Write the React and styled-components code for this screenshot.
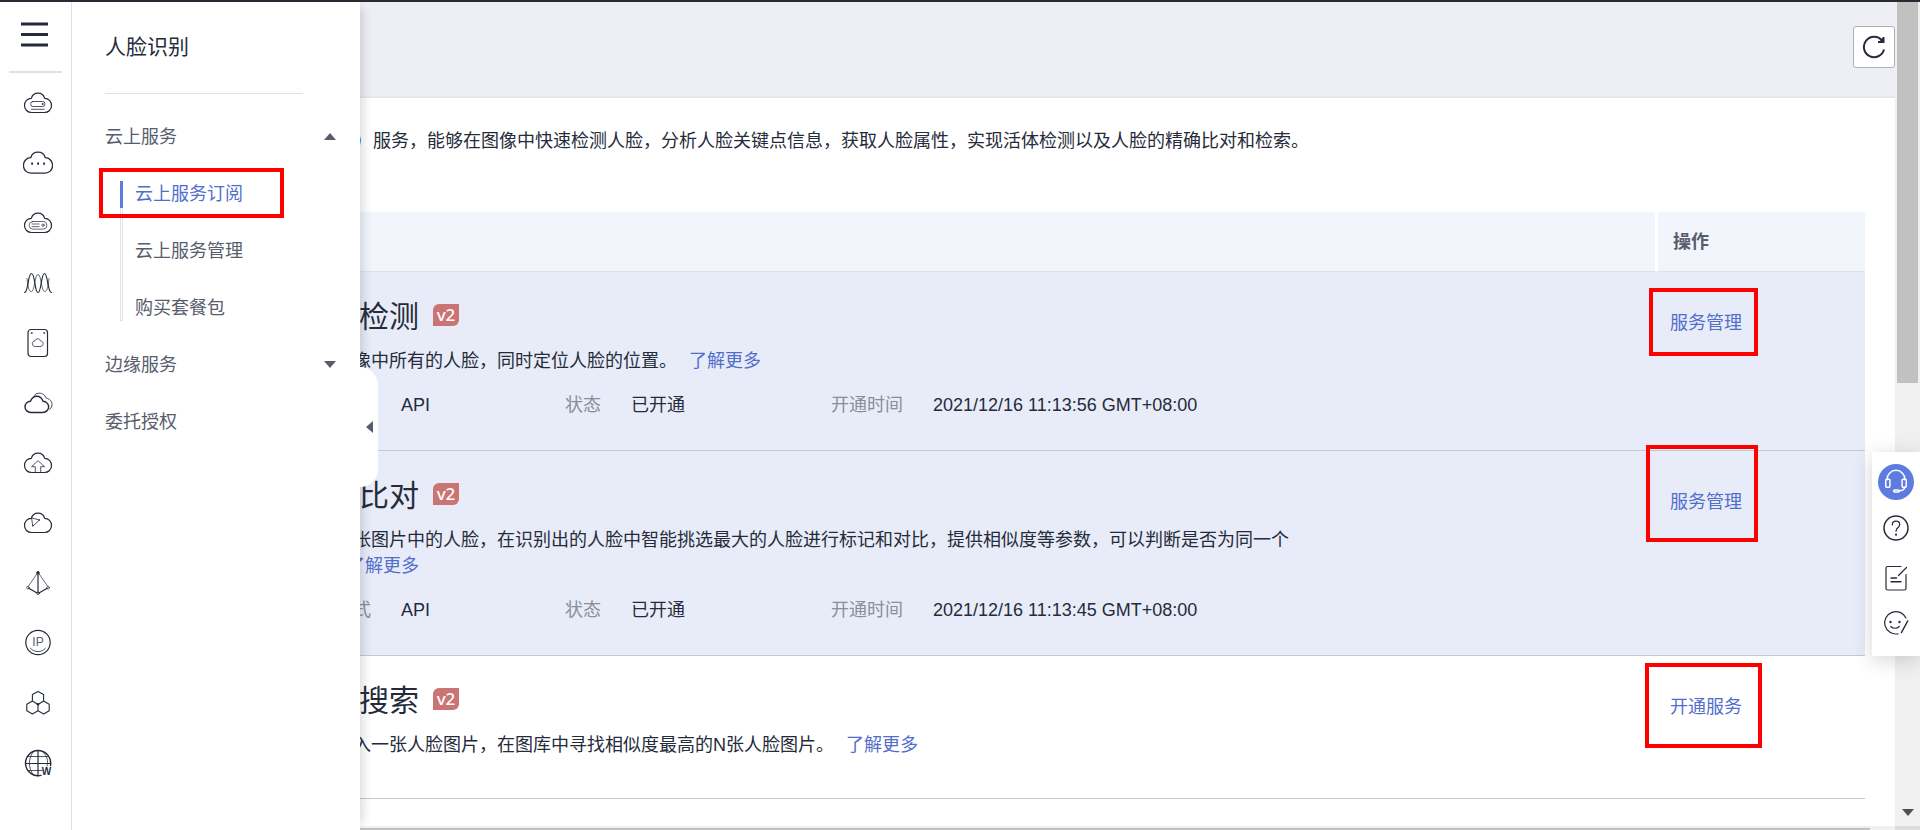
import React from "react";
import styled, { createGlobalStyle } from "styled-components";

const Global = createGlobalStyle`
  *, *::before { box-sizing: border-box; }
  body {
    margin: 0;
    overflow: hidden;
    background: #fff;
    color: #252b3a;
    font: 400 18px/26px "Liberation Sans", "Noto Sans CJK SC", sans-serif;
  }
  button { font: inherit; color: inherit; border: 0; padding: 0; background: none; cursor: pointer; }
  a { color: #526ecc; text-decoration: none; }
`;

/* ---------- frame ---------- */

const Page = styled.div`
  display: flex;
  flex-direction: column;
  height: 100vh;
`;

const TopEdge = styled.div`
  flex: none;
  height: 2px;
  background: #282b33;
`;

const Frame = styled.div`
  flex: 1;
  min-height: 0;
  display: grid;
  grid-template-columns: 72px minmax(0, 1fr) 25px;
  position: relative;
`;

/* ---------- icon rail ---------- */

const Rail = styled.nav`
  display: flex;
  flex-direction: column;
  align-items: center;
  border-right: 1px solid #dfe1e6;
  background: #fff;
  overflow: hidden;
`;

const MenuButton = styled.button`
  flex: none;
  width: 53px;
  height: 71px;
  padding: 19px 0 0 12px;
  border-bottom: 2px solid #dfe1e6;
  display: flex;
  align-items: flex-start;
`;

const RailLink = styled.a`
  flex: none;
  height: 60px;
  padding-left: 4px;
  display: flex;
  align-items: center;
  color: #252b3a;
`;

/* ---------- service panel ---------- */

const Panel = styled.aside`
  position: absolute;
  z-index: 2;
  top: 0;
  bottom: 0;
  left: 72px;
  width: 288px;
  padding: 30px 24px 0 33px;
  background: #fff;
  box-shadow: 8px 0 10px -6px rgba(37, 43, 58, 0.2);
`;

const PanelTitle = styled.h1`
  margin: 0 33px 14px 0;
  padding-bottom: 31px;
  border-bottom: 1px solid #dfe1e6;
  font-size: 21px;
  font-weight: 400;
  line-height: 30px;
`;

const GroupButton = styled.button`
  display: flex;
  align-items: center;
  justify-content: space-between;
  width: 100%;
  height: 57px;
  color: #575d6c;
  text-align: left;
`;

const PlainItem = styled.a`
  display: flex;
  align-items: center;
  height: 57px;
  color: #575d6c;
`;

const Triangle = styled.span`
  width: 0;
  height: 0;
  border: 6px solid transparent;
  border-width: ${(p) => (p.$dir === "left" ? "6px 7px 6px 0" : p.$dir === "up" ? "0 6px 7px" : "7px 6px 0")};
  border-${(p) => ({ left: "right", up: "bottom", down: "top" })[p.$dir]}-color: ${(p) => p.$color || "#575d6c"};
`;

const SubMenu = styled.ul`
  list-style: none;
  margin: 0;
  padding: 0 0 0 15px;
`;

const SubItem = styled.li`
  position: relative;
  display: flex;
  height: 57px;
  padding: ${(p) => (p.$first ? "16px 0 0" : p.$last ? "0 0 15px" : "0")};
  &::before {
    content: "";
    width: 3px;
    margin-right: 12px;
    background: ${(p) => p.$first && "linear-gradient(#5e7ce0 27px, transparent 27px),"}
      linear-gradient(90deg, #dfe1e6 1px, #fff 1px 2px, #dfe1e6 2px);
    border-bottom: ${(p) => (p.$last ? "1px solid #dfe1e6" : "0")};
  }
  a {
    display: flex;
    align-items: ${(p) => (p.$first ? "flex-start" : p.$last ? "flex-end" : "center")};
    color: ${(p) => (p.$first ? "#526ecc" : "#575d6c")};
  }
`;

const CollapseTab = styled.button`
  position: absolute;
  top: 365px;
  left: 100%;
  width: 18px;
  height: 120px;
  padding-left: 6px;
  display: flex;
  align-items: center;
  border-radius: 0 18px 18px 0;
  background: #fff;
`;

/* Red frame laid over an element that deserves attention */
const Mark = styled.span`
  position: absolute;
  z-index: 1;
  top: ${(p) => p.$top}px;
  left: ${(p) => p.$left}px;
  width: ${(p) => p.$w}px;
  height: ${(p) => p.$h}px;
  border: 4px solid #f00;
  pointer-events: none;
`;

/* ---------- main column ---------- */

const Main = styled.main`
  display: flex;
  flex-direction: column;
  min-height: 0;
  overflow: hidden;
`;

const Toolbar = styled.header`
  flex: none;
  display: flex;
  justify-content: flex-end;
  height: 96px;
  padding-top: 24px;
  background: #eeeff5;
  box-shadow: inset 0 -3px 3px -2px rgba(37, 43, 58, 0.08);
`;

const Refresh = styled.button`
  width: 42px;
  height: 42px;
  display: flex;
  align-items: center;
  justify-content: center;
  border: 1px solid #adb0b8;
  border-radius: 3px;
  background: #fff;
`;

const Content = styled.section`
  flex: 1;
  min-height: 0;
  overflow: hidden;
  padding: 30px 30px 0 157px;
`;

const Intro = styled.p`
  margin: 0 0 58px;
`;

const Table = styled.table`
  width: 100%;
  border-collapse: separate;
  border-spacing: 0;
  table-layout: fixed;
`;

const Th = styled.th`
  height: 60px;
  padding: 0 15px;
  text-align: left;
  font-weight: 700;
  color: #575d6c;
  background: #f2f5fc;
  border-bottom: 1px solid #dfe1e6;
  width: ${(p) => (p.$action ? "207px" : "auto")};
  border-right: ${(p) => (p.$action ? "0" : "3px solid #fff")};
`;

const Td = styled.td`
  position: relative;
  vertical-align: top;
  padding: ${(p) => (p.$action ? "38px 12px 0" : "24px 0 32px 70px")};
  background: ${(p) => (p.$on ? "#e8ecf8" : "#fff")};
  border-bottom: 1px solid #c8c9cc;
`;

const ServiceTitle = styled.h2`
  display: flex;
  align-items: center;
  gap: 14px;
  margin: 0 0 10px;
  font-size: 30px;
  font-weight: 400;
  line-height: 42px;
`;

const Badge = styled.span`
  width: 26px;
  height: 22px;
  margin-bottom: 4px;
  border-radius: 6px 0 6px 0;
  background: #cb7474;
  color: #fff;
  font: 500 17px/22px "Noto Sans", sans-serif;
  text-align: center;
`;

const Desc = styled.p`
  max-width: 1000px;
  min-height: ${(p) => (p.$alone ? "34px" : "26px")};
  margin: 0;
  a { margin-left: 12px; }
`;

const Facts = styled.dl`
  display: grid;
  grid-template-columns: 266px 266px auto;
  margin: 18px 0 0;
  div { display: flex; gap: 30px; }
  dt { color: #8a8e99; }
  dd { margin: 0; }
`;

const HScroll = styled.div`
  flex: none;
  height: 4px;
  padding: 2px 25px 0 0;
  background: #f0f0f0;
  div { height: 2px; background: #c1c1c1; }
`;

const VScroll = styled.div`
  display: flex;
  flex-direction: column;
  align-items: center;
  background: #f0f0f0;
`;

const VThumb = styled.div`
  width: 21px;
  height: 46%;
  margin-bottom: auto;
  background: #c1c1c1;
`;

const Corner = styled.div`
  width: 100%;
  height: 4px;
  margin-top: 10px;
  background: #dcdcdc;
`;

/* ---------- floating help ---------- */

const Helper = styled.div`
  position: absolute;
  z-index: 3;
  right: 0;
  top: 450px;
  width: 48px;
  height: 204px;
  padding-top: 12px;
  display: flex;
  flex-direction: column;
  align-items: center;
  background: #fff;
  box-shadow: 0 4px 20px rgba(37, 43, 58, 0.2);
`;

const HelperButton = styled.button`
  width: 36px;
  height: ${(p) => (p.$primary ? "36px" : "30px")};
  margin-bottom: ${(p) => p.$gap}px;
  display: flex;
  align-items: center;
  justify-content: center;
  border-radius: 50%;
  background: ${(p) => (p.$primary ? "#5e7ce0" : "none")};
  color: ${(p) => (p.$primary ? "#fff" : "#252b3a")};
`;

/* ---------- drawings ---------- */

const Svg = ({ size = 30, children, w = 1.2 }) => (
  <svg width={size} height={size} viewBox="0 0 30 30" fill="none" stroke="currentColor" strokeWidth={w} strokeLinecap="round" strokeLinejoin="round" aria-hidden="true">
    {children}
  </svg>
);

const CLOUD = "M8.5 24.5C4.500 24.500 1.500 21.500 1.500 17.500C1.500 13.500 4.500 10.300 8.300 10.300C9.200 7.200 11.800 5.200 15 5.200C18.200 5.200 20.800 7.200 21.700 10.300C25.500 10.300 28.500 13.500 28.500 17.500C28.500 21.500 25.500 24.500 21.500 24.500Z";
const Cloud = (props) => <path d={CLOUD} {...props} />;

const railIcons = [
  ["弹性云服务器", <><Cloud /><rect x="7.800" y="13.500" width="14" height="5" rx="2" strokeWidth=".8" /><path d="M8.500 21.300H21" strokeWidth=".8" /><circle cx="19.700" cy="16" r=".9" fill="currentColor" stroke="none" /></>],
  ["云耀云服务器", <><Cloud transform="translate(-1.200 -1.400) scale(1.080)" /><path d="M8.200 15.700h1.800M14.200 15.700h1.800M20.200 15.700h1.800" strokeWidth="2.200" strokeLinecap="butt" /></>],
  ["裸金属服务器", <><Cloud /><rect x="6.200" y="13.500" width="17.600" height="7.600" rx="3.500" strokeWidth=".7" /><path d="M9 16h7M9 18.600h7" strokeWidth=".7" /><circle cx="20" cy="17.200" r="1.200" strokeWidth=".7" /></>],
  ["弹性伸缩", <><path d="M1.500 24.500C5.500 24.500 4.700 5.500 8.500 5.500S11.500 24.500 15 24.500 18 5.500 21.500 5.500 24.500 24.500 28.500 24.500" /><path d="M4 10.500C5 18 5.500 23.500 8.200 23.500C12 23.500 11.500 6.500 15 6.500S18 23.500 21.800 23.500C24.500 23.500 25 18 26 10.500" strokeWidth=".7" /></>],
  ["云手机", <><rect x="5" y="1.500" width="19.500" height="27" rx="3" /><path d="M8.500 5h.5M21 5h.5" strokeWidth="1.600" /><Cloud transform="translate(8.700 8.700) scale(.4)" strokeWidth="2" /></>],
  ["专属云", <><path d="M11.500 7.400C12.500 5.800 14.200 5.200 16.500 5.200C19.600 5.200 22 7 23 10C26.500 10.700 29 13.300 29 16.500C29 18.700 28 20.300 26.500 21.300" strokeWidth=".9" strokeDasharray="1.500 .8" /><path d="M8 24.500C4.500 24.500 2 22 2 19C2 16 4.300 13.500 7.500 13.300C8.600 10.200 10.900 8.200 13.800 8.200C16.700 8.200 19 10 20 13.300C23.200 13.500 25.600 16 25.600 19C25.600 22 23 24.500 19.800 24.500Z" strokeWidth="1.400" /></>],
  ["云备份", <><Cloud /><path d="M12.300 24.500V18.700H8.500L15 12.700L21.500 18.700H17.700V24.500" strokeWidth=".8" /></>],
  ["云桌面", <><Cloud /><path d="M9 10L16.500 12L10 18Z" strokeWidth=".8" /><circle cx="16.200" cy="12" r=".8" fill="currentColor" stroke="none" /><circle cx="10.200" cy="17.500" r=".8" fill="currentColor" stroke="none" /></>],
  ["对象存储", <><path d="M15 5V24.500M5.800 20.300L14 25M24.200 20.300L16 25" /><path d="M14.500 5L5.300 18.300M15.500 5L24.700 18.300" strokeWidth=".7" /><circle cx="15" cy="4.700" r="1.700" fill="currentColor" stroke="none" /><circle cx="4.900" cy="19.700" r="1.300" strokeWidth=".7" /><circle cx="25.100" cy="19.700" r="1.300" strokeWidth=".7" /><circle cx="15" cy="25.300" r="1.300" strokeWidth=".7" /></>],
  ["弹性公网", <><circle cx="15" cy="14.500" r="12.200" /><path d="M7.500 20.300C11.500 24.800 18.500 24.800 22.500 20.300" strokeWidth=".8" /><text x="15" y="18" textAnchor="middle" fontSize="12" fill="#575d6c" stroke="none" fontFamily="Liberation Sans">IP</text></>],
  ["区块链", <><path d="M15 3.500L20.600 6.500V13L15 16.500L9.400 13V6.500ZM9.400 13L15 16.500V22.800L9.400 26L3.800 22.800V16.300ZM20.600 13L26.200 16.300V22.800L20.600 26L15 22.800V16.500Z" strokeWidth="1.100" /><circle cx="15" cy="16.300" r="1.200" fill="currentColor" stroke="none" /></>],
  ["域名", <><path d="M27.500 17.500A12.600 12.600 0 1 0 18 27.400" strokeWidth="1.400" /><path d="M2.500 15.500H27.600M15 2.700V27.800" /><path d="M19.500 3.600C25 9 25 13 24 18M10.500 3.600C5 10 5 20 10.500 27.200M5 8.500H25M5 22.500H19" strokeWidth=".8" /><text x="23.500" y="27" textAnchor="middle" fontSize="10" fontWeight="700" fill="currentColor" stroke="none" fontFamily="Liberation Sans">W</text></>],
];

const services = [
  { name: "人脸检测", on: true, desc: "检测图像中所有的人脸，同时定位人脸的位置。", time: "2021/12/16 11:13:56 GMT+08:00", action: "服务管理", mark: { $top: 16, $left: -9, $w: 109, $h: 68 } },
  { name: "人脸比对", on: true, desc: "检测两张图片中的人脸，在识别出的人脸中智能挑选最大的人脸进行标记和对比，提供相似度等参数，可以判断是否为同一个人。", time: "2021/12/16 11:13:45 GMT+08:00", action: "服务管理", mark: { $top: -6, $left: -12, $w: 112, $h: 97 } },
  { name: "人脸搜索", on: false, desc: "根据输入一张人脸图片，在图库中寻找相似度最高的N张人脸图片。", action: "开通服务", mark: { $top: 7, $left: -13, $w: 117, $h: 85 } },
];

const ServiceRow = ({ s }) => (
  <tr>
    <Td $on={s.on}>
      <ServiceTitle>{s.name}<Badge>v2</Badge></ServiceTitle>
      <Desc $alone={!s.time}>{s.desc}<a href="#more">了解更多</a></Desc>
      {s.time && (
        <Facts>
          <div><dt>使用方式</dt><dd>API</dd></div>
          <div><dt>状态</dt><dd>已开通</dd></div>
          <div><dt>开通时间</dt><dd>{s.time}</dd></div>
        </Facts>
      )}
    </Td>
    <Td $on={s.on} $action>
      <a href="#service">{s.action}</a>
      <Mark {...s.mark} />
    </Td>
  </tr>
);

export default function App() {
  return (
    <Page>
      <Global />
      <TopEdge />
      <Frame>
        <Rail>
          <MenuButton aria-label="服务列表">
            <svg width="27" height="27" viewBox="0 0 27 27" stroke="#252b3a" strokeWidth="3.200" aria-hidden="true"><path d="M0 3H27M0 13.500H27M0 24H27" /></svg>
          </MenuButton>
          {railIcons.map(([label, icon]) => (
            <RailLink key={label} href="#rail" aria-label={label}><Svg>{icon}</Svg></RailLink>
          ))}
        </Rail>

        <Main>
          <Toolbar>
            <Refresh aria-label="刷新">
              <svg width="24" height="24" viewBox="0 0 24 24" fill="none" stroke="#252b3a" strokeWidth="2" aria-hidden="true">
                <path d="M22 14.500A10.200 10.200 0 1 1 20 5.500" /><path d="M21.500 2V7H16" />
                <path d="M17 7L21.500 2V7Z" fill="#252b3a" stroke="none" />
              </svg>
            </Refresh>
          </Toolbar>
          <Content>
            <Intro>人脸识别（FRS）服务，能够在图像中快速检测人脸，分析人脸关键点信息，获取人脸属性，实现活体检测以及人脸的精确比对和检索。</Intro>
            <Table>
              <thead><tr><Th scope="col">服务</Th><Th scope="col" $action>操作</Th></tr></thead>
              <tbody>{services.map((s) => <ServiceRow key={s.name} s={s} />)}</tbody>
            </Table>
          </Content>
          <HScroll><div /></HScroll>
        </Main>

        <VScroll>
          <VThumb />
          <Triangle $dir="down" $color="#505050" />
          <Corner />
        </VScroll>

        <Panel>
          <PanelTitle>人脸识别</PanelTitle>
          <GroupButton aria-expanded="true">云上服务<Triangle $dir="up" /></GroupButton>
          <SubMenu>
            <SubItem $first><a href="#subscribe">云上服务订阅</a><Mark $top={3} $left={-21} $w={185} $h={50} /></SubItem>
            <SubItem><a href="#manage">云上服务管理</a></SubItem>
            <SubItem $last><a href="#package">购买套餐包</a></SubItem>
          </SubMenu>
          <GroupButton aria-expanded="false">边缘服务<Triangle $dir="down" /></GroupButton>
          <PlainItem href="#delegate">委托授权</PlainItem>
          <CollapseTab aria-label="收起"><Triangle $dir="left" /></CollapseTab>
        </Panel>

        <Helper>
          <HelperButton $primary $gap={13} aria-label="在线客服">
            <Svg size={28} w={1.600}><path d="M5.500 12.500V12A9.500 9.500 0 0 1 24.500 12V12.500" /><rect x="4" y="12" width="4.500" height="8.500" rx="1" /><rect x="21.500" y="12" width="4.500" height="8.500" rx="1" /><path d="M24.500 20.500C24 23 22 24.300 18.500 24.500" /><rect x="12.500" y="23.500" width="6" height="2.200" rx="1.100" /></Svg>
          </HelperButton>
          <HelperButton $gap={20} aria-label="帮助">
            <Svg w={1.500}><circle cx="15" cy="15" r="12" /><path d="M11.300 12C11.300 9.500 12.800 8.200 15 8.200S18.700 9.700 18.700 11.700C18.700 14.500 15 14.700 15 18.300" strokeWidth="1.200" /><circle cx="15" cy="21.700" r="1.100" fill="currentColor" stroke="none" /></Svg>
          </HelperButton>
          <HelperButton $gap={15} aria-label="反馈">
            <Svg><path d="M20 3.500H6.500Q5 3.500 5 5V25.500Q5 27 6.500 27H23.500Q25 27 25 25.500V11.500" /><path d="M17.500 12.500L25.500 4.500" /><path d="M10 15H15.500M10 18.700H20" strokeWidth="1.400" /></Svg>
          </HelperButton>
          <HelperButton $gap={0} aria-label="满意度">
            <Svg><path d="M25 10A11.200 11.200 0 1 0 17 25.800" /><path d="M26.700 13L20.500 24.500" strokeWidth="1.500" /><path d="M9.800 18.500C12 20.800 16 20.800 18.200 18.500" /><circle cx="9.500" cy="14" r="1.200" fill="currentColor" stroke="none" /><circle cx="18.500" cy="14" r="1.200" fill="currentColor" stroke="none" /></Svg>
          </HelperButton>
        </Helper>
      </Frame>
    </Page>
  );
}
